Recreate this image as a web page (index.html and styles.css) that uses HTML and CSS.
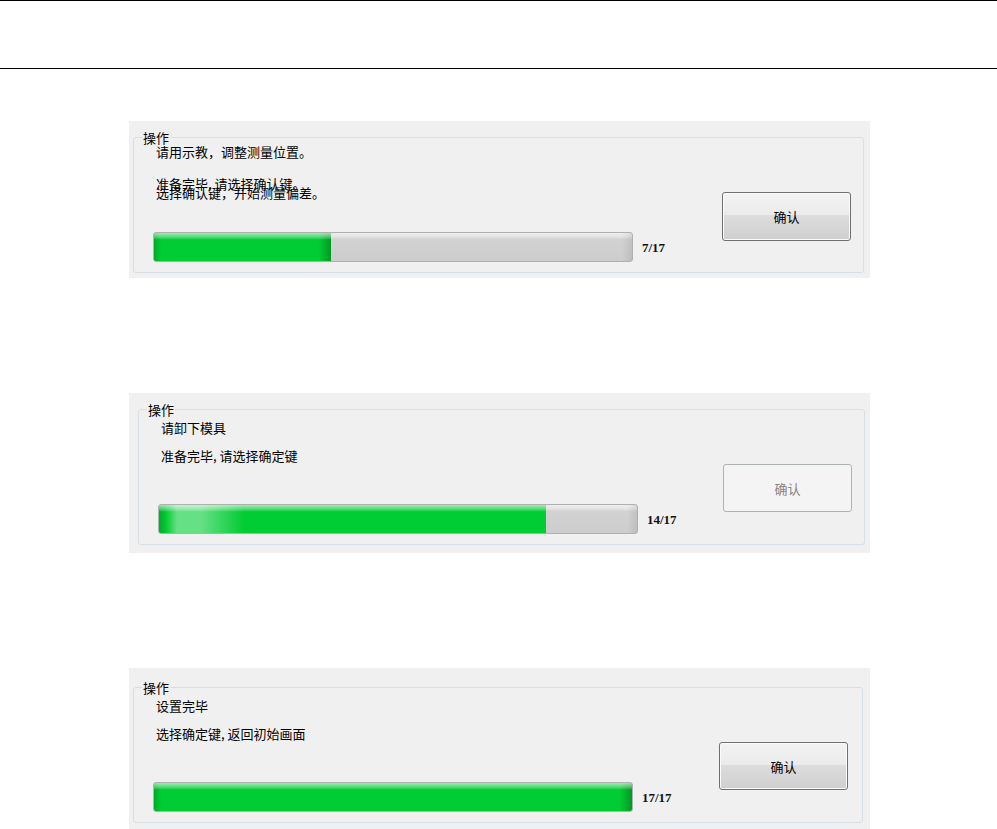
FILE: index.html
```html
<!DOCTYPE html>
<html lang="zh-CN">
<head>
<meta charset="utf-8">
<title>操作</title>
<link rel="stylesheet" href="styles.css">
</head>
<body>
<div class="header"></div>
<main class="stack">
  <section class="panel panel--first">
    <fieldset class="group">
      <legend class="legend">操作</legend>
      <div class="body">
        <div class="main">
          <p class="msg msg--top">请用示教，调整测量位置。</p>
          <p class="msg msg--spaced">准备完毕, 请选择确认键。</p>
          <p class="msg msg--overlap">选择确认键，开始测量偏差。</p>
          <div class="progress-row progress-row--near">
            <div class="progress"><div class="fill fill--a" style="width:37%"></div></div>
            <span class="count">7/17</span>
          </div>
        </div>
        <button class="btn btn--tall" type="button">确认</button>
      </div>
    </fieldset>
  </section>

  <section class="panel">
    <fieldset class="group group--inset">
      <legend class="legend">操作</legend>
      <div class="body">
        <div class="main">
          <p class="msg">请卸下模具</p>
          <p class="msg">准备完毕, 请选择确定键</p>
          <div class="progress-row">
            <div class="progress"><div class="fill fill--b" style="width:81%"></div></div>
            <span class="count">14/17</span>
          </div>
        </div>
        <button class="btn btn--pulled" type="button" disabled>确认</button>
      </div>
    </fieldset>
  </section>

  <section class="panel panel--low">
    <fieldset class="group group--wide">
      <legend class="legend">操作</legend>
      <div class="body">
        <div class="main">
          <p class="msg">设置完毕</p>
          <p class="msg">选择确定键, 返回初始画面</p>
          <div class="progress-row">
            <div class="progress"><div class="fill fill--c" style="width:100%"></div></div>
            <span class="count">17/17</span>
          </div>
        </div>
        <button class="btn btn--left" type="button">确认</button>
      </div>
    </fieldset>
  </section>
</main>
</body>
</html>
```
FILE: styles.css
```css
* { box-sizing: border-box; }

html, body {
  margin: 0;
  padding: 0;
  background: #ffffff;
}

body {
  width: 997px;
  font-family: "Noto Sans CJK SC", "Noto Sans", sans-serif;
  font-size: 13px;
  color: #000000;
}

.header {
  height: 69px;
  border-top: 1px solid #000000;
  border-bottom: 1px solid #000000;
}

.stack {
  display: flex;
  flex-direction: column;
  gap: 115px;
  padding: 52px 0 0 129px;
}

.panel {
  width: 741px;
  background: #f0f0f0;
  padding: 10px 0 8px;
  display: flow-root;
}

.panel--first { padding-bottom: 5px; }
.panel--low { padding-top: 13px; }

.group {
  margin: 0 6px 0 4px;
  padding: 0 0 10px 19px;
  border: 1px solid #d5dfe5;
  border-radius: 3px;
  min-width: 0;
}

.group--inset { margin: 0 5px 0 9px; }
.group--wide { margin: 0 7px 0 4px; }

.legend {
  margin-left: -11px;
  padding: 0 1px;
  font-size: 13px;
  line-height: 13px;
}

.body {
  display: flex;
  align-items: flex-start;
}

.main {
  flex: none;
  width: 567px;
}

.msg {
  margin: 15px 0 0;
  padding-left: 3px;
  line-height: 13px;
  white-space: nowrap;
}

.msg:first-child { margin-top: 5px; }
.msg.msg--top { margin-top: 1px; }
.msg.msg--spaced { margin-top: 19px; }
.msg.msg--overlap { margin-top: -4px; }

.progress-row {
  display: flex;
  align-items: center;
  margin-top: 42px;
}

.progress-row--near { margin-top: 33px; }

.progress {
  flex: none;
  width: 480px;
  height: 30px;
  border: 1px solid #b0b0b0;
  border-radius: 3px;
  overflow: hidden;
  background:
    linear-gradient(to right, rgba(0,0,0,0) calc(100% - 10px), rgba(0,0,0,0.08) 100%),
    linear-gradient(to bottom, #eeeeee 0, #e3e3e3 14%, #d2d2d2 22%, #cdcdcd 100%);
}

.fill {
  height: 100%;
  background-color: #00cc33;
  background-image:
    linear-gradient(to bottom, rgba(255,255,255,0.62) 0, rgba(255,255,255,0.42) 10%, rgba(255,255,255,0.2) 19%, rgba(255,255,255,0) 24%),
    linear-gradient(to right, rgba(0,90,20,0.3) 0, rgba(0,90,20,0) 7px, rgba(0,90,20,0) calc(100% - 12px), rgba(0,90,20,0.45) 100%);
}

.fill--b {
  background-image:
    linear-gradient(to bottom, rgba(255,255,255,0.62) 0, rgba(255,255,255,0.42) 10%, rgba(255,255,255,0.2) 19%, rgba(255,255,255,0) 24%),
    linear-gradient(to right, rgba(0,90,20,0.3) 0, rgba(0,90,20,0) 7px, rgba(255,255,255,0.4) 18px, rgba(255,255,255,0.4) 42px, rgba(255,255,255,0) 85px);
}

.count {
  margin-left: 9px;
  font-family: "Liberation Serif", "DejaVu Serif", serif;
  font-size: 13px;
  font-weight: 700;
  line-height: 1;
  color: #111111;
}

.btn {
  flex: none;
  width: 129px;
  height: 48px;
  margin-top: 48px;
  padding: 0;
  border: 1px solid #707070;
  border-radius: 3px;
  background: linear-gradient(to bottom, #f3f3f3 0%, #ebebeb 47%, #dddddd 47%, #cfcfcf 100%);
  box-shadow: inset 0 0 0 1px #fbfbfb;
  font-family: inherit;
  font-size: 13px;
  line-height: 13px;
  color: #000000;
}

.btn--tall { height: 49px; margin-left: 2px; }
.btn--pulled { margin-left: -2px; }
.btn--left { margin-left: -1px; }

.btn:disabled {
  border-color: #adb2b5;
  background: #f4f4f4;
  box-shadow: none;
  color: #838383;
}
```
